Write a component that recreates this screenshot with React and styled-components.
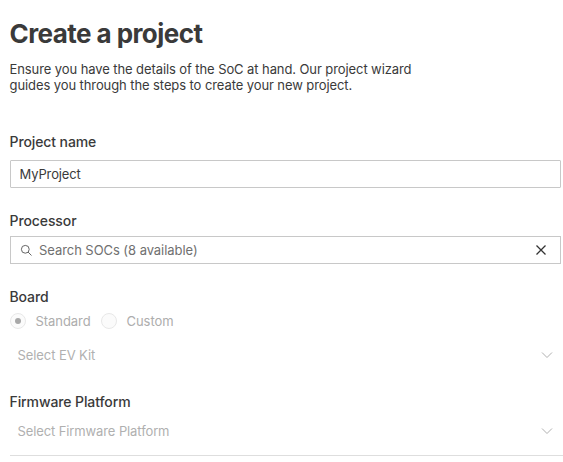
import React from "react";
import styled, { createGlobalStyle } from "styled-components";

const GlobalStyle = createGlobalStyle`
  * { box-sizing: border-box; }
  body {
    margin: 0;
    background: #fff;
    color: #3a3a3a;
    font-family: Inter, "Liberation Sans", sans-serif;
    font-size: 13px;
    overflow: hidden;
  }
`;

const Page = styled.main`
  height: 462px;
  padding: 18px 0 0 10px;
  overflow: hidden;
`;

const Title = styled.h1`
  margin: 0 0 0 -0.5px;
  font-size: 26px;
  line-height: 32px;
  font-weight: 700;
  letter-spacing: -0.56px;
  white-space: nowrap;
`;

const Intro = styled.p`
  margin: 11px 0 0 -0.5px;
  line-height: 16px;
  letter-spacing: -0.09px;
  white-space: nowrap;
`;

const Field = styled.section`
  display: flex;
  flex-direction: column;
  margin-top: ${(p) => p.$gap}px;
`;

const Label = styled.label`
  height: 18px;
  margin-left: -0.5px;
  font-size: 14px;
  line-height: 18px;
  font-weight: 500;
  letter-spacing: -0.1px;
  white-space: nowrap;
`;

const Text = styled.span`
  margin-left: -0.5px;
  letter-spacing: ${(p) => p.$spacing || 0}px;
  white-space: nowrap;
`;

const InputBox = styled.div`
  display: flex;
  align-items: center;
  width: 551px;
  height: 28px;
  margin-top: ${(p) => p.$gap}px;
  padding: 0 13px 0 9px;
  border: 1px solid #c8c8c8;
  border-radius: ${(p) => p.$radius || 0}px;
`;

const SearchText = styled(Text)`
  flex: 1;
  margin-left: 6px;
  color: #707070;
`;

const RadioRow = styled.div`
  display: flex;
  align-items: center;
  height: 16px;
  margin-top: 7px;
  color: #adadad;
`;

const Radio = styled.span`
  display: flex;
  align-items: center;
  justify-content: center;
  width: 16px;
  height: 16px;
  margin-right: 10px;
  border: 1px solid #e8e8e8;
  border-radius: 50%;
  background: #fbfbfb;
`;

const Dot = styled.span`
  width: 6px;
  height: 6px;
  border-radius: 50%;
  background: #a8a8a8;
`;

const Option = styled.div`
  display: flex;
  align-items: center;
  width: 91px;
`;

const Select = styled.div`
  display: flex;
  align-items: center;
  justify-content: space-between;
  height: ${(p) => p.$height}px;
  margin-top: ${(p) => p.$gap}px;
  padding: 0 10px 0 8px;
  color: #b0b0b0;
  border-bottom: ${(p) => (p.$line ? "1px solid #dedede" : "0")};
`;

const Icon = styled.svg`
  display: block;
  flex: none;
  fill: none;
  stroke: ${(p) => p.$color};
  stroke-width: ${(p) => p.$weight || 1};
`;

const SearchIcon = () => (
  <Icon $color="#555" $weight={0.9} width="13" height="13" viewBox="0 0 13 13">
    <circle cx="5.3" cy="5.3" r="3.9" />
    <path d="M8.1 8.1L11.5 11.5" />
  </Icon>
);

const CloseIcon = () => (
  <Icon $color="#333" $weight={1.3} width="12" height="12" viewBox="0 0 12 12">
    <path d="M1.5 1.5L10.5 10.5M10.5 1.5L1.5 10.5" />
  </Icon>
);

const Chevron = () => (
  <Icon $color="#b0b0b0" width="12" height="8" viewBox="0 0 12 8">
    <path d="M1 1.5L6 6.5L11 1.5" />
  </Icon>
);

export default function App() {
  return (
    <Page>
      <GlobalStyle />
      <Title>Create a project</Title>
      <Intro>
        Ensure you have the details of the SoC at hand. Our project wizard
        <br />
        guides you through the steps to create your new project.
      </Intro>
      <Field $gap={40}>
        <Label>Project name</Label>
        <InputBox $gap={9} $radius={1}>
          <Text $spacing={-0.13}>MyProject</Text>
        </InputBox>
      </Field>
      <Field $gap={24}>
        <Label>Processor</Label>
        <InputBox $gap={6}>
          <SearchIcon />
          <SearchText $spacing={-0.06}>Search SOCs (8 available)</SearchText>
          <CloseIcon />
        </InputBox>
      </Field>
      <Field $gap={24}>
        <Label>Board</Label>
        <RadioRow>
          <Option>
            <Radio><Dot /></Radio>
            <Text $spacing={-0.05}>Standard</Text>
          </Option>
          <Option>
            <Radio />
            <Text $spacing={-0.05}>Custom</Text>
          </Option>
        </RadioRow>
        <Select $gap={11} $height={30}>
          <Text $spacing={-0.08}>Select EV Kit</Text>
          <Chevron />
        </Select>
      </Field>
      <Field $gap={23}>
        <Label>Firmware Platform</Label>
        <Select $gap={-4} $height={49} $line>
          <Text $spacing={-0.11}>Select Firmware Platform</Text>
          <Chevron />
        </Select>
      </Field>
    </Page>
  );
}
